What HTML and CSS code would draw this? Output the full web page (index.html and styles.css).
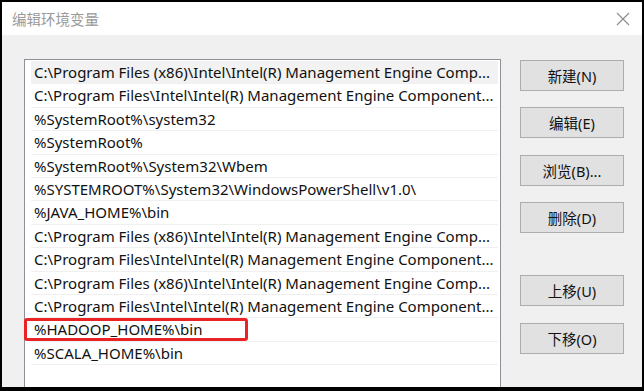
FILE: index.html
```html
<!DOCTYPE html>
<html lang="zh-CN">
<head>
    <meta charset="UTF-8">
    <title>编辑环境变量</title>
    <link rel="stylesheet" href="styles.css">
</head>
<body>
    <div class="window">
        <div class="titlebar">
            <span class="title">编辑环境变量</span>
            <svg class="close" width="14" height="14" viewBox="0 0 14 14">
                <path d="M1 1 L13 13 M13 1 L1 13" stroke="#8a8a8a" stroke-width="1.1" fill="none"/>
            </svg>
        </div>
        <div class="content">
            <div class="listbox">
                <div class="item hover">C:\Program Files (x86)\Intel\Intel(R) Management Engine Comp...</div>
                <div class="item">C:\Program Files\Intel\Intel(R) Management Engine Component...</div>
                <div class="item">%SystemRoot%\system32</div>
                <div class="item">%SystemRoot%</div>
                <div class="item">%SystemRoot%\System32\Wbem</div>
                <div class="item">%SYSTEMROOT%\System32\WindowsPowerShell\v1.0\</div>
                <div class="item">%JAVA_HOME%\bin</div>
                <div class="item">C:\Program Files (x86)\Intel\Intel(R) Management Engine Comp...</div>
                <div class="item">C:\Program Files\Intel\Intel(R) Management Engine Component...</div>
                <div class="item">C:\Program Files (x86)\Intel\Intel(R) Management Engine Comp...</div>
                <div class="item">C:\Program Files\Intel\Intel(R) Management Engine Component...</div>
                <div class="item marked">%HADOOP_HOME%\bin<span class="mark"></span></div>
                <div class="item">%SCALA_HOME%\bin</div>
            </div>
            <div class="buttons">
                <button class="btn">新建(N)</button>
                <button class="btn">编辑(E)</button>
                <button class="btn">浏览(B)...</button>
                <button class="btn">删除(D)</button>
                <button class="btn spaced">上移(U)</button>
                <button class="btn">下移(O)</button>
            </div>
        </div>
    </div>
</body>
</html>
```

FILE: styles.css
```css
html, body {
    margin: 0;
    background: #000;
    overflow: hidden;
}
body {
    padding: 2px 2px 0 2px;
    font-family: "Noto Sans", "Noto Sans CJK SC", sans-serif;
    font-size: 15px;
    color: #111;
}
.window {
    height: 385px;
    background: #f0f0f0;
    display: flex;
    flex-direction: column;
    overflow: hidden;
}
.titlebar {
    height: 33px;
    background: #fff;
    display: flex;
    align-items: center;
    padding: 0 12px 0 10px;
}
.title {
    font-family: "Noto Sans CJK SC", sans-serif;
    font-size: 14.5px;
    color: #9a9a9a;
}
.close { margin-left: auto; }
.content {
    flex: 1;
    display: flex;
    padding: 24px 0 0 22px;
}
.listbox {
    width: 477px;
    border: 1px solid #8d9096;
    border-bottom: none;
    background: #fff;
    padding: 1px 2px 0 6px;
    box-sizing: border-box;
}
.item {
    position: relative;
    height: 23.4px;
    line-height: 23px;
    padding-left: 3px;
    border-bottom: 1px solid #f0f0f0;
    box-sizing: border-box;
    white-space: nowrap;
    overflow: visible;
}
.hover { background: #f2f2f2; }
.mark {
    position: absolute;
    left: -7px;
    top: 0;
    width: 224px;
    height: 23px;
    border: 3px solid #ea2424;
    border-radius: 3px;
    box-sizing: border-box;
}
.buttons {
    display: flex;
    flex-direction: column;
    gap: 16.4px;
    margin-left: 19px;
    padding-top: 1px;
}
.btn {
    width: 104px;
    height: 31px;
    background: #e1e1e1;
    border: 1px solid #adadad;
    font-family: "Noto Sans", "Noto Sans CJK SC", sans-serif;
    font-size: 14.5px;
    color: #111;
    padding: 0;
}
.spaced { margin-top: 25.6px; }
```
